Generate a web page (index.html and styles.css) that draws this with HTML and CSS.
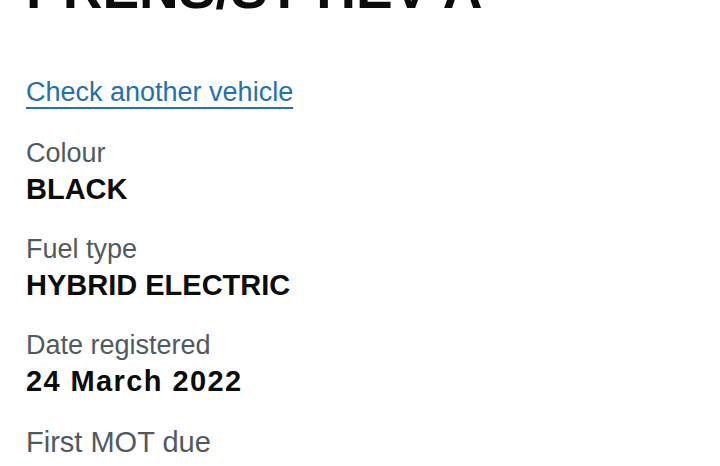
FILE: index.html
```html
<!DOCTYPE html>
<html lang="en">
<head>
<meta charset="utf-8">
<title>Vehicle details</title>
<link rel="stylesheet" href="styles.css">
</head>
<body>
<main class="page">
  <h1 class="title">PRENS/ST HEV A</h1>
  <p class="back"><a class="link" href="#">Check another vehicle</a></p>
  <dl class="details">
    <div class="item">
      <dt class="label">Colour</dt>
      <dd class="value">BLACK</dd>
    </div>
    <div class="item">
      <dt class="label">Fuel type</dt>
      <dd class="value">HYBRID ELECTRIC</dd>
    </div>
    <div class="item">
      <dt class="label">Date registered</dt>
      <dd class="value value-date">24 March 2022</dd>
    </div>
    <div class="item">
      <dt class="label label-large">First MOT due</dt>
    </div>
  </dl>
</main>
</body>
</html>
```
FILE: styles.css
```css
html, body {
  margin: 0;
  padding: 0;
  background: #ffffff;
}
body {
  font-family: "Liberation Sans", Arial, sans-serif;
  color: #0b0c0c;
  overflow: hidden;
}
.page {
  padding: 0 26px;
}
.title {
  margin: -36px 0 0;
  font-size: 55px;
  line-height: 50px;
  font-weight: 700;
  color: #0b0c0c;
}
.back {
  margin: 60px 0 0;
  font-size: 27px;
  line-height: 36px;
}
.link {
  color: #2470b0;
  text-decoration: underline;
  text-decoration-thickness: 2px;
  text-underline-offset: 6px;
}
.details {
  margin: 25px 0 0;
  display: flex;
  flex-direction: column;
  gap: 24px;
}
.item {
  display: flex;
  flex-direction: column;
}
.label {
  font-size: 27px;
  line-height: 36px;
  color: #505a5f;
}
.label-large {
  font-size: 29px;
  line-height: 38px;
}
.value {
  margin: 0;
  font-size: 29px;
  line-height: 36px;
  font-weight: 700;
  color: #0b0c0c;
}
.value-date {
  letter-spacing: 1.4px;
}
```
